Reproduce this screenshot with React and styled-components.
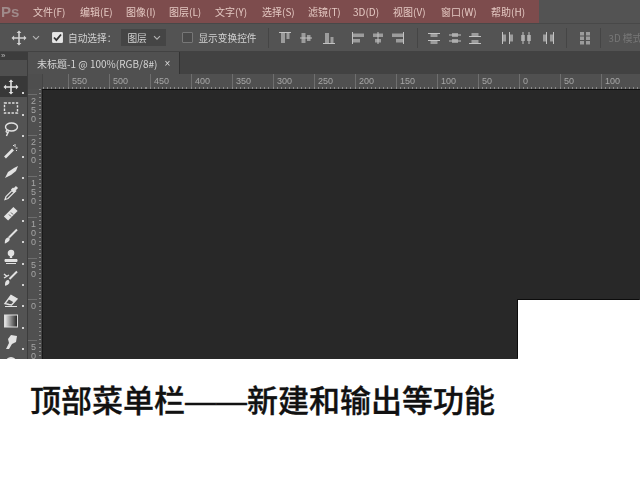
import React from "react";
import styled, { createGlobalStyle } from "styled-components";

const CJK = `"Noto Sans CJK SC", "Liberation Sans", sans-serif`;

const GlobalStyle = createGlobalStyle`
  html, body { margin: 0; padding: 0; background: #fff; }
  body { width: 640px; height: 484px; overflow: hidden; font-family: ${CJK}; }
`;

const MENUS = [
  ["文件(F)", 47], ["编辑(E)", 46], ["图像(I)", 43], ["图层(L)", 46], ["文字(Y)", 47], ["选择(S)", 46],
  ["滤镜(T)", 45], ["3D(D)", 40], ["视图(V)", 48], ["窗口(W)", 50], ["帮助(H)", 48],
];
const H_RULER = ["550", "500", "450", "400", "350", "300", "250", "200", "150", "100", "50", "0", "50", "100"];
const V_RULER = ["250", "200", "150", "100", "50", "0", "50"];

const Window = styled.div`
  width: 640px;
  height: 359px;
  display: flex;
  flex-direction: column;
  overflow: hidden;
  background: #535353;
  position: relative;
  filter: blur(0.4px);
`;

const MenuBar = styled.div`
  height: 23px;
  flex: none;
  display: flex;
  background: #535353;
`;
const MenuTint = styled.div`
  width: 539px;
  display: flex;
  align-items: center;
  background: #7d4c4d;
`;
const Logo = styled.div`
  width: 33px;
  padding-left: 1px;
  box-sizing: border-box;
  font: bold 15px "Liberation Sans", sans-serif;
  color: #a08a8a;
`;
const MenuItem = styled.div`
  width: ${(p) => p.$w}px;
  flex: none;
  font-size: 10px;
  color: #e4c8c2;
  white-space: nowrap;
`;

const OptionsBar = styled.div`
  height: 29px;
  flex: none;
  box-sizing: border-box;
  display: flex;
  align-items: center;
  background: #535353;
  border-top: 1px solid #484848;
  border-bottom: 1px solid #424242;
  color: #d2d2d2;
  font-size: 9.7px;
  overflow: hidden;
  svg {
    flex: none;
  }
`;
const OptionsLead = styled.span`
  width: 11px;
  flex: none;
`;
const Check = styled.div`
  width: 11px;
  height: 11px;
  flex: none;
  margin-left: ${(p) => p.$ml}px;
  margin-right: 5px;
  box-sizing: border-box;
  border-radius: 1px;
  border: 1px solid ${(p) => (p.$on ? "#ddd" : "#777")};
  background: ${(p) => (p.$on ? "#e6e6e6" : "#4a4a4a")};
  display: flex;
  align-items: center;
  justify-content: center;
`;
const Select = styled.div`
  width: 45px;
  height: 17px;
  margin-left: 5px;
  padding: 0 5px 0 6px;
  box-sizing: border-box;
  flex: none;
  display: flex;
  align-items: center;
  justify-content: space-between;
  background: #454545;
`;
const Label = styled.span`
  white-space: nowrap;
  flex: none;
`;
const Sep = styled.div`
  width: 1px;
  height: 20px;
  flex: none;
  margin-left: ${(p) => p.$ml}px;
  background: #454545;
`;
const AlignSlot = styled.div`
  flex: none;
  width: 14px;
  height: 14px;
  margin-left: ${(p) => p.$ml}px;
`;
const Mode3D = styled.span`
  margin-left: 8px;
  white-space: nowrap;
  flex: none;
  color: #777;
`;

const Workspace = styled.div`
  flex: 1;
  display: flex;
  min-height: 0;
`;
const ToolPanel = styled.div`
  width: 28px;
  flex: none;
  box-sizing: border-box;
  display: flex;
  flex-direction: column;
  align-items: stretch;
  overflow: hidden;
  background: #535353;
  border-right: 1px solid #3c3c3c;
`;
const PanelGrip = styled.div`
  height: 8px;
  flex: none;
  background: #3c3c3c;
  color: #bbb;
  font: 8px/8px "Liberation Sans", sans-serif;
  padding-left: 1px;
`;
const PanelTitle = styled.div`
  height: 16px;
  flex: none;
  background: #4f4f4f;
`;
const ToolButton = styled.div`
  height: 21.3px;
  flex: none;
  display: flex;
  align-items: center;
  justify-content: center;
  position: relative;
  box-sizing: border-box;
  padding-right: 5px;
  color: #e2e2e2;
  background: ${(p) => (p.$active ? "#383838" : "transparent")};
  &::after {
    content: "";
    position: absolute;
    right: 3px;
    bottom: 3px;
    width: 2px;
    height: 2px;
    background: #d0d0d0;
  }
`;

const Document = styled.div`
  flex: 1;
  min-width: 0;
  display: flex;
  flex-direction: column;
`;
const TabRow = styled.div`
  height: 22px;
  flex: none;
  display: flex;
  background: #424242;
`;
const Tab = styled.div`
  width: 152px;
  display: flex;
  align-items: center;
  gap: 7px;
  padding-left: 9px;
  box-sizing: border-box;
  background: #505050;
  border-right: 1px solid #333;
  color: #d4d4d4;
  font-size: 10px;
  white-space: nowrap;
`;
const TabClose = styled.span`
  font: 10px "Liberation Sans", sans-serif;
  color: #ddd;
`;

const HRulerRow = styled.div`
  height: 15px;
  flex: none;
  display: flex;
  background: #505050;
`;
const RulerCorner = styled.div`
  width: 14px;
  flex: none;
  background: #4e4e4e;
  border-right: 1px solid #444;
`;
const HRuler = styled.div`
  flex: 1;
  display: flex;
  padding-left: 25px;
  overflow: hidden;
  background:
    repeating-linear-gradient(90deg, #8a8a8a 0 1px, transparent 1px 4.1px) 0 100% / 100% 2px no-repeat,
    #505050;
`;
const HTick = styled.div`
  width: 41px;
  height: 13px;
  flex: none;
  box-sizing: border-box;
  padding-left: 3px;
  border-left: 1px solid #6e6e6e;
  font: 9px/14px "Liberation Sans", sans-serif;
  color: #a6a6a6;
`;
const CanvasRow = styled.div`
  flex: 1;
  display: flex;
  min-height: 0;
`;
const VRuler = styled.div`
  width: 14px;
  flex: none;
  display: flex;
  flex-direction: column;
  padding-top: 5px;
  box-sizing: border-box;
  overflow: hidden;
  border-right: 1px solid #444;
  background:
    repeating-linear-gradient(180deg, #8a8a8a 0 1px, transparent 1px 4.1px) 100% 0 / 2px 100% no-repeat,
    #505050;
`;
const VTick = styled.div`
  height: 41px;
  flex: none;
  box-sizing: border-box;
  padding: 2px 0 0 3px;
  border-top: 1px solid #6e6e6e;
  font: 9px/9px "Liberation Sans", sans-serif;
  color: #a6a6a6;
  word-break: break-all;
  width: 9px;
`;
const Canvas = styled.div`
  flex: 1;
  position: relative;
  background: #282828;
  border-top: 1px solid #0e0e0e;
  border-left: 1px solid #1a1a1a;
`;
// white patch that sits over the canvas in the picture
const WhiteNotch = styled.div`
  position: absolute;
  right: 0;
  bottom: 0;
  width: 122px;
  height: 59px;
  background: #fff;
  box-shadow: -1px -1px 0 #0c0c0c;
`;

const Caption = styled.div`
  height: 125px;
  box-sizing: border-box;
  padding: 20px 0 0 30px;
  font-size: 31px;
  line-height: 40px;
  font-weight: 500;
  -webkit-text-stroke: 0.35px #111;
  color: #111;
  white-space: nowrap;
  font-family: ${CJK};
`;
const CaptionDash = styled.span`
  font-family: "Liberation Sans", sans-serif;
  font-weight: 400;
`;

const Svg = ({ size = 16, children }) => (
  <svg width={size} height={size} viewBox="0 0 16 16" fill="none" stroke="currentColor" strokeWidth="1.4">
    {children}
  </svg>
);

const MoveIcon = () => (
  <Svg>
    <path d="M8 2v12M2 8h12" strokeWidth="1.6" />
    <path d="M8 0.5l2.4 2.6H5.6zM8 15.5l2.4-2.6H5.6zM0.5 8l2.6-2.4v4.8zM15.5 8l-2.6-2.4v4.8z" fill="currentColor" stroke="none" />
  </Svg>
);
const Chevron = ({ ml = 0 }) => (
  <svg width="8" height="6" viewBox="0 0 8 6" fill="none" stroke="#b4b4b4" strokeWidth="1.1" style={{ marginLeft: ml }}>
    <path d="M1 1.2l3 3 3-3" />
  </svg>
);
const Tick = () => (
  <svg width="9" height="9" viewBox="0 0 9 9" fill="none" stroke="#333" strokeWidth="1.8">
    <path d="M1 4.5l2.4 2.6L8 1.5" />
  </svg>
);

// each align icon is a thin guide line plus grey blocks
const ALIGN_ICONS = {
  top: ["M1 1h12v1H1z", "M3 2h4v10H3zM8.5 2h3v6h-3z"],
  middle: ["M1 6.5h12v1H1z", "M2.5 2h4v10h-4zM8 4h3.5v6H8z"],
  bottom: ["M1 12h12v1H1z", "M3 2h4v10H3zM8.5 6h3v6h-3z"],
  left: ["M1 1h1v12H1z", "M2 2.5h11v3.5H2zM2 8h7v3.5H2z"],
  center: ["M6.5 1h1v12h-1z", "M2 2.5h10V6H2zM4 8h6v3.5H4z"],
  right: ["M12 1h1v12h-1z", "M1 2.5h11V6H1zM5 8h7v3.5H5z"],
  distTop: ["M1 2h12v1H1zM1 9h12v1H1z", "M3.5 3h7v3h-7zM3.5 10h7v3h-7z"],
  distMiddle: ["M1 3.5h12v1H1zM1 9.5h12v1H1z", "M4 2h6v4H4zM4 8h6v4H4z"],
  distBottom: ["M1 5h12v1H1zM1 12h12v1H1z", "M3.5 2h7v3h-7zM3.5 9h7v3h-7z"],
  distLeft: ["M2 1h1v12H2zM9 1h1v12H9z", "M3 3.5h3v7H3zM10 3.5h3v7h-3z"],
  distCenter: ["M3.5 1h1v12h-1zM9.5 1h1v12h-1z", "M2 4h4v6H2zM8 4h4v6H8z"],
  distRight: ["M5 1h1v12H5zM12 1h1v12h-1z", "M2 3.5h3v7H2zM9 3.5h3v7H9z"],
  auto: ["", "M2 1h4v3.5H2zM8 1h4v3.5H8zM2 5.5h4V9H2zM8 5.5h4V9H8zM2 10h4v3.5H2zM8 10h4v3.5H8z"],
};
const AlignIcon = ({ kind }) => {
  const [line, blocks] = ALIGN_ICONS[kind];
  return (
    <svg width="14" height="14" viewBox="0 0 14 14">
      <path d={blocks} fill="#9c9c9c" />
      {line && <path d={line} fill="#c2c2c2" />}
    </svg>
  );
};

const TOOLS = [
  <MoveIcon />,
  <Svg><rect x="1.5" y="3" width="13" height="10" strokeDasharray="2.4 1.4" /></Svg>,
  <Svg><ellipse cx="8.5" cy="6" rx="6" ry="4" /><path d="M4 9c-2 2 0 3 1 2s-1 2-1.5 4" /></Svg>,
  <Svg><path d="M2 14.5l8-8" strokeWidth="2.6" /><path d="M12 1v3M14.5 5h-2M10 2l1 1M14 8l-1-1" strokeWidth="1" /></Svg>,
  <Svg><path d="M2 14l3-6 6-4 4-2-2 5-5 4z" fill="currentColor" stroke="none" /></Svg>,
  <Svg><path d="M2 14.5l1-3 6-6 2 2-6 6z" strokeWidth="1.2" /><path d="M9 3.5l3.5 3.5M11 5l3-3" strokeWidth="3" /></Svg>,
  <Svg><path d="M3 12.5l9.5-9.5" strokeWidth="6" /><path d="M6 8.5l2 2M8 6.5l2 2" stroke="#555" strokeWidth="1" /></Svg>,
  <Svg><path d="M2.5 14.5c0-3 1-4 3-4.5 1 1 1 3-3 4.5z" fill="currentColor" /><path d="M6 9.5l8-8" strokeWidth="2" /></Svg>,
  <Svg><circle cx="8" cy="4" r="2.6" fill="currentColor" /><path d="M8 6v3" strokeWidth="2.4" /><path d="M2 10.5h12v2H2zM3 14.5h10" fill="currentColor" strokeWidth="1" /></Svg>,
  <Svg><path d="M3 14.5c0-2 .5-3 2-3.5 1 1 .5 3-2 3.5zM6.5 9l7.5-7.5" strokeWidth="2" /><path d="M1 4l3 2.5M1 8l5-3" strokeWidth="1.4" /></Svg>,
  <Svg><path d="M6 12.5l-4-1 6-8 6 3.5-5.5 6z" /><path d="M8 3.5l6 3.5-3 3.6-6-3.6z" fill="currentColor" stroke="none" /><path d="M2 14.5h12" strokeWidth="1" /></Svg>,
  <Svg><rect x="1.5" y="2" width="13" height="12" fill="url(#toolGrad)" stroke="#ddd" strokeWidth="1" /></Svg>,
  <Svg><path d="M3 15l3-6-1-4 3-4 6 1-1 6-4 2-3 5z" fill="currentColor" stroke="none" /></Svg>,
  <Svg><circle cx="8" cy="6.5" r="5.5" fill="currentColor" stroke="none" /></Svg>,
];

const ALIGN_GROUPS = [
  [["top", 9], ["middle", 7], ["bottom", 9], ["left", 15], ["center", 6], ["right", 6]],
  [["distTop", 9], ["distMiddle", 7], ["distBottom", 6], ["distLeft", 18], ["distCenter", 5], ["distRight", 8]],
  [["auto", 11]],
];

const App = () => {
  return (
    <>
      <GlobalStyle />
      <svg width="0" height="0" style={{ position: "absolute" }}>
        <defs>
          <linearGradient id="toolGrad" x1="0" x2="1" y1="0" y2="0">
            <stop offset="0" stopColor="#eee" />
            <stop offset="1" stopColor="#222" />
          </linearGradient>
        </defs>
      </svg>
      <Window>
        <MenuBar>
          <MenuTint>
            <Logo>Ps</Logo>
            {MENUS.map(([name, w]) => (
              <MenuItem key={name} $w={w}>{name}</MenuItem>
            ))}
          </MenuTint>
        </MenuBar>
        <OptionsBar>
          <OptionsLead />
          <MoveIcon />
          <Chevron ml={5} />
          <Check $on $ml={12}><Tick /></Check>
          <Label>自动选择：</Label>
          <Select>图层<Chevron /></Select>
          <Check $ml={16} />
          <Label>显示变换控件</Label>
          <Sep $ml={11} />
          {ALIGN_GROUPS.map((group, g) => (
            <React.Fragment key={g}>
              {group.map(([kind, ml]) => (
                <AlignSlot key={kind} $ml={ml}><AlignIcon kind={kind} /></AlignSlot>
              ))}
              <Sep $ml={g === 0 ? 12 : g === 1 ? 11 : 8} />
            </React.Fragment>
          ))}
          <Mode3D>3D 模式</Mode3D>
        </OptionsBar>
        <Workspace>
          <ToolPanel>
            <PanelGrip>»</PanelGrip>
            <PanelTitle />
            {TOOLS.map((icon, i) => (
              <ToolButton key={i} $active={i === 0}>{icon}</ToolButton>
            ))}
          </ToolPanel>
          <Document>
            <TabRow>
              <Tab>
                <span>未标题-1 @ 100%(RGB/8#)</span>
                <TabClose>×</TabClose>
              </Tab>
            </TabRow>
            <HRulerRow>
              <RulerCorner />
              <HRuler>
                {H_RULER.map((n, i) => (
                  <HTick key={i}>{n}</HTick>
                ))}
              </HRuler>
            </HRulerRow>
            <CanvasRow>
              <VRuler>
                {V_RULER.map((n, i) => (
                  <VTick key={i}>{n}</VTick>
                ))}
              </VRuler>
              <Canvas>
                <WhiteNotch />
              </Canvas>
            </CanvasRow>
          </Document>
        </Workspace>
      </Window>
      <Caption>顶部菜单栏<CaptionDash>——</CaptionDash>新建和输出等功能</Caption>
    </>
  );
};

export default App;
